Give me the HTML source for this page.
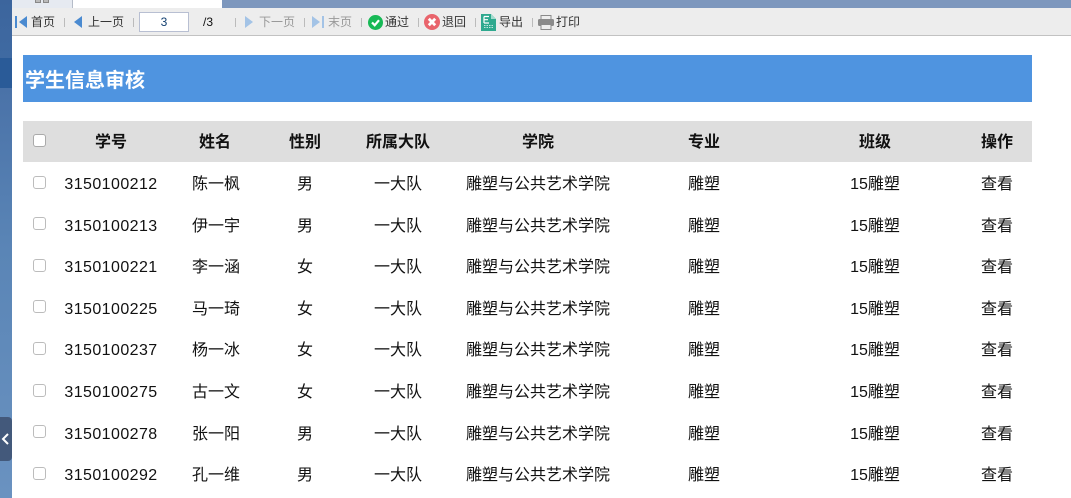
<!DOCTYPE html>
<html lang="zh"><head><meta charset="utf-8"><style>
html,body{margin:0;padding:0;background:#fff}
body{width:1071px;height:498px;overflow:hidden;position:relative;font-family:"Liberation Sans","Noto Sans CJK SC",sans-serif;color:#111}
.a{position:absolute}
.t{position:absolute;white-space:nowrap;transform:translateX(-50%);font-size:16px;line-height:20px}
.h{font-weight:700;top:133px}
.tb{position:absolute;top:14px;font-size:12px;line-height:16px;white-space:nowrap;color:#333}
.g{color:#999}
.sep{position:absolute;top:18px;width:1px;height:9px;background:#bbb}
.cb{position:absolute;left:33px;width:11px;height:11px;border:1px solid #bcbcbc;border-radius:3px;background:#fff}
svg{position:absolute;overflow:visible}
</style></head><body>
<div class="a" style="left:0;top:0;width:12px;height:498px;background:linear-gradient(#3c659d 0,#3f6aa2 58px,#4a72a8 88px,#5a85b6 250px,#6a92c0 498px)"></div>
<div class="a" style="left:0;top:58px;width:12px;height:30px;background:#2a5b98"></div>
<div class="a" style="left:0;top:417px;width:12px;height:44px;background:#43597b;border-radius:0 4px 4px 0"></div>
<svg style="left:0;top:417px" width="12" height="44"><path d="M8 17 L3 22 L8 27" fill="none" stroke="#fff" stroke-width="2"/></svg>
<div class="a" style="left:12px;top:0;width:60px;height:8px;background:#e6eaf1;border-right:1px solid #b5bcc8"></div>
<div class="a" style="left:35px;top:0;width:6px;height:3px;border:1px solid #888;border-top:0;box-sizing:border-box;background:#bbb"></div>
<div class="a" style="left:43px;top:0;width:6px;height:3px;border:1px solid #888;border-top:0;box-sizing:border-box;background:#bbb"></div>
<div class="a" style="left:222px;top:0;width:849px;height:8px;background:#7d97bd"></div>
<div class="a" style="left:12px;top:8px;width:1059px;height:27px;background:#ededed;border-bottom:1px solid #c2c2c2"></div>

<svg style="left:15px;top:15px" width="13" height="14"><rect x="0" y="1" width="2" height="12" fill="#4a8ad0"/><path d="M12 1V13L4 7Z" fill="#4a8ad0"/></svg>
<div class="tb" style="left:31px">首页</div><div class="sep" style="left:64px"></div>
<svg style="left:74px;top:15px" width="9" height="14"><path d="M8 1V13L0 7Z" fill="#4a8ad0"/></svg>
<div class="tb" style="left:88px">上一页</div><div class="sep" style="left:133px"></div>
<div class="a" style="left:139px;top:12px;width:50px;height:20px;box-sizing:border-box;background:#fff;border:1px solid #b8bfd2;font-size:12px;line-height:18px;text-align:center;color:#123f70">3</div>
<div class="tb" style="left:203px;color:#111">/3</div><div class="sep" style="left:235px"></div>
<svg style="left:245px;top:15px" width="9" height="14"><path d="M0 1V13L8 7Z" fill="#a3c3e6"/></svg>
<div class="tb g" style="left:259px">下一页</div><div class="sep" style="left:304px"></div>
<svg style="left:312px;top:15px" width="13" height="14"><path d="M0 1V13L8 7Z" fill="#a3c3e6"/><rect x="10" y="1" width="2" height="12" fill="#a3c3e6"/></svg>
<div class="tb g" style="left:328px">末页</div><div class="sep" style="left:361px"></div>
<svg style="left:368px;top:15px" width="15" height="15"><circle cx="7.5" cy="7.5" r="7.5" fill="#17b956"/><path d="M4 7.5L6.7 10.2L11 5.2" fill="none" stroke="#fff" stroke-width="2.2"/></svg>
<div class="tb" style="left:385px">通过</div><div class="sep" style="left:418px"></div>
<svg style="left:424px;top:14px" width="16" height="16"><circle cx="8" cy="8" r="8" fill="#e9646c"/><path d="M4.8 4.8L11.2 11.2M11.2 4.8L4.8 11.2" fill="none" stroke="#fff" stroke-width="2.8"/></svg>
<div class="tb" style="left:442px">退回</div><div class="sep" style="left:475px"></div>
<svg style="left:481px;top:14px" width="15" height="17"><path d="M0 0H10L15 5V17H0Z" fill="#2fa98f"/><path d="M10 0L15 5H10Z" fill="#a5dccf"/><path d="M3 2.5H8M3 2.5V9M3 5.7H7M3 9H8" fill="none" stroke="#fff" stroke-width="1.2"/><path d="M3 11.5H12M3 13.5H12" stroke="#bfe6dc" stroke-width="1" stroke-dasharray="1.5 1"/></svg>
<div class="tb" style="left:499px">导出</div><div class="sep" style="left:532px"></div>
<svg style="left:538px;top:15px" width="16" height="15"><rect x="3" y="0.5" width="10" height="4" fill="#eee" stroke="#8a8a8a"/><rect x="0" y="4" width="16" height="7" rx="1.5" fill="#8a8a8a"/><rect x="3" y="9.5" width="10" height="5" fill="#eee" stroke="#8a8a8a"/></svg>
<div class="tb" style="left:556px">打印</div>

<div class="a" style="left:23px;top:55px;width:1009px;height:47px;background:#4f94e0"></div>
<div class="a" style="left:25px;top:67px;font-size:20px;line-height:28px;font-weight:700;color:#fff;white-space:nowrap">学生信息审核</div>
<div class="a" style="left:23px;top:121px;width:1009px;height:41px;background:#dedede"></div>
<div class="cb" style="top:134px;border-color:#aaa"></div>
<div class="t h" style="left:111px">学号</div>
<div class="t h" style="left:215px">姓名</div>
<div class="t h" style="left:305px">性别</div>
<div class="t h" style="left:398px">所属大队</div>
<div class="t h" style="left:538px">学院</div>
<div class="t h" style="left:704px">专业</div>
<div class="t h" style="left:875px">班级</div>
<div class="t h" style="left:997px">操作</div>

<div class="cb" style="top:176px"></div><div class="t" style="top:175px;left:111px;letter-spacing:.42px">3150100212</div><div class="t" style="top:175px;left:216px">陈一枫</div><div class="t" style="top:175px;left:305px">男</div><div class="t" style="top:175px;left:398px">一大队</div><div class="t" style="top:175px;left:538px">雕塑与公共艺术学院</div><div class="t" style="top:175px;left:704px">雕塑</div><div class="t" style="top:175px;left:875px">15雕塑</div><div class="t" style="top:175px;left:997px">查看</div>
<div class="cb" style="top:217px"></div><div class="t" style="top:217px;left:111px;letter-spacing:.42px">3150100213</div><div class="t" style="top:217px;left:216px">伊一宇</div><div class="t" style="top:217px;left:305px">男</div><div class="t" style="top:217px;left:398px">一大队</div><div class="t" style="top:217px;left:538px">雕塑与公共艺术学院</div><div class="t" style="top:217px;left:704px">雕塑</div><div class="t" style="top:217px;left:875px">15雕塑</div><div class="t" style="top:217px;left:997px">查看</div>
<div class="cb" style="top:259px"></div><div class="t" style="top:258px;left:111px;letter-spacing:.42px">3150100221</div><div class="t" style="top:258px;left:216px">李一涵</div><div class="t" style="top:258px;left:305px">女</div><div class="t" style="top:258px;left:398px">一大队</div><div class="t" style="top:258px;left:538px">雕塑与公共艺术学院</div><div class="t" style="top:258px;left:704px">雕塑</div><div class="t" style="top:258px;left:875px">15雕塑</div><div class="t" style="top:258px;left:997px">查看</div>
<div class="cb" style="top:300px"></div><div class="t" style="top:300px;left:111px;letter-spacing:.42px">3150100225</div><div class="t" style="top:300px;left:216px">马一琦</div><div class="t" style="top:300px;left:305px">女</div><div class="t" style="top:300px;left:398px">一大队</div><div class="t" style="top:300px;left:538px">雕塑与公共艺术学院</div><div class="t" style="top:300px;left:704px">雕塑</div><div class="t" style="top:300px;left:875px">15雕塑</div><div class="t" style="top:300px;left:997px">查看</div>
<div class="cb" style="top:342px"></div><div class="t" style="top:341px;left:111px;letter-spacing:.42px">3150100237</div><div class="t" style="top:341px;left:216px">杨一冰</div><div class="t" style="top:341px;left:305px">女</div><div class="t" style="top:341px;left:398px">一大队</div><div class="t" style="top:341px;left:538px">雕塑与公共艺术学院</div><div class="t" style="top:341px;left:704px">雕塑</div><div class="t" style="top:341px;left:875px">15雕塑</div><div class="t" style="top:341px;left:997px">查看</div>
<div class="cb" style="top:384px"></div><div class="t" style="top:383px;left:111px;letter-spacing:.42px">3150100275</div><div class="t" style="top:383px;left:216px">古一文</div><div class="t" style="top:383px;left:305px">女</div><div class="t" style="top:383px;left:398px">一大队</div><div class="t" style="top:383px;left:538px">雕塑与公共艺术学院</div><div class="t" style="top:383px;left:704px">雕塑</div><div class="t" style="top:383px;left:875px">15雕塑</div><div class="t" style="top:383px;left:997px">查看</div>
<div class="cb" style="top:425px"></div><div class="t" style="top:425px;left:111px;letter-spacing:.42px">3150100278</div><div class="t" style="top:425px;left:216px">张一阳</div><div class="t" style="top:425px;left:305px">男</div><div class="t" style="top:425px;left:398px">一大队</div><div class="t" style="top:425px;left:538px">雕塑与公共艺术学院</div><div class="t" style="top:425px;left:704px">雕塑</div><div class="t" style="top:425px;left:875px">15雕塑</div><div class="t" style="top:425px;left:997px">查看</div>
<div class="cb" style="top:467px"></div><div class="t" style="top:466px;left:111px;letter-spacing:.42px">3150100292</div><div class="t" style="top:466px;left:216px">孔一维</div><div class="t" style="top:466px;left:305px">男</div><div class="t" style="top:466px;left:398px">一大队</div><div class="t" style="top:466px;left:538px">雕塑与公共艺术学院</div><div class="t" style="top:466px;left:704px">雕塑</div><div class="t" style="top:466px;left:875px">15雕塑</div><div class="t" style="top:466px;left:997px">查看</div>
</body></html>
